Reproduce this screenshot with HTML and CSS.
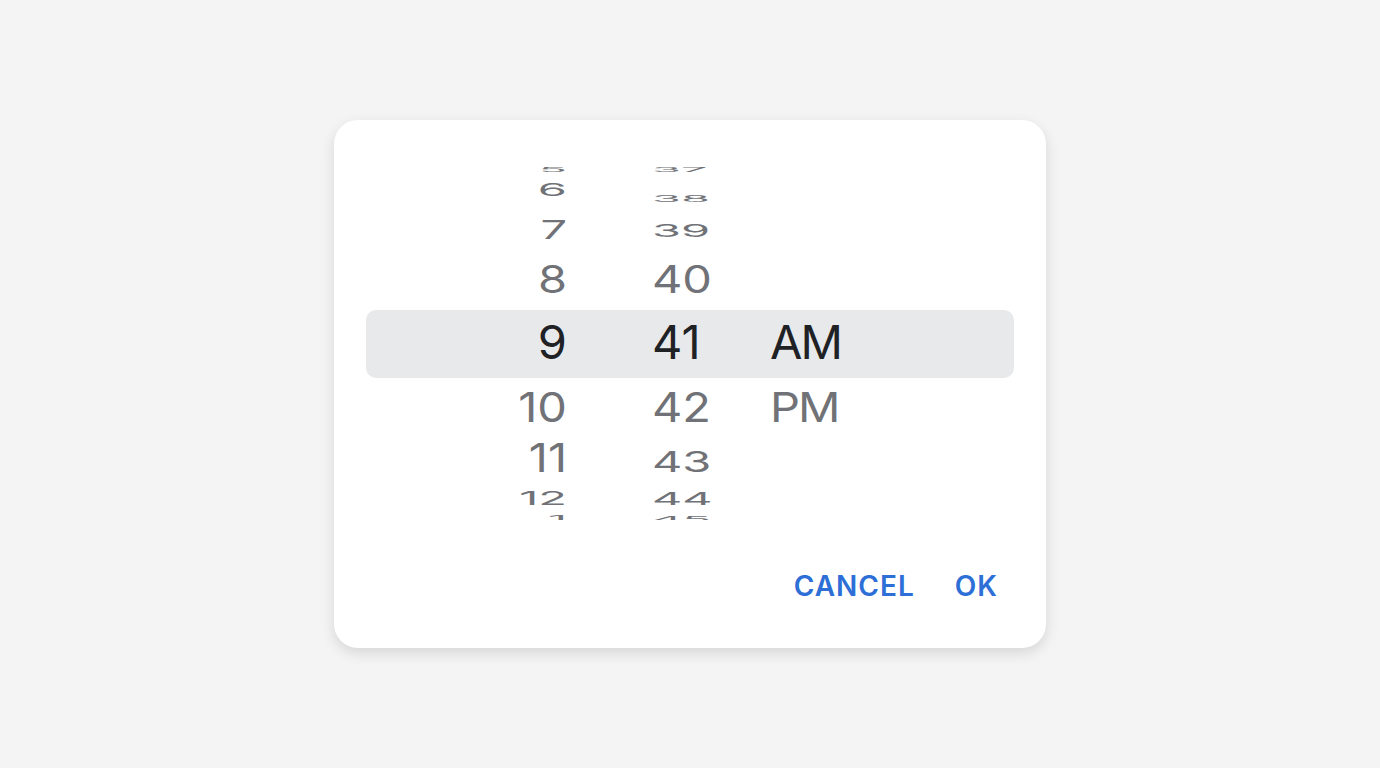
FILE: index.html
```html
<!DOCTYPE html>
<html lang="en">
<head>
  <meta charset="UTF-8">
  <title>Time picker</title>
  <link rel="stylesheet" href="styles.css">
</head>
<body>

<div class="dialog">
  <div class="wheel">
    <div class="band"></div>

    <div class="col hours">
      <div class="item">5</div>
      <div class="item">6</div>
      <div class="item">7</div>
      <div class="item">8</div>
      <div class="item selected">9</div>
      <div class="item">10</div>
      <div class="item">11</div>
      <div class="item">12</div>
      <div class="item">1</div>
    </div>

    <div class="col minutes">
      <div class="item">37</div>
      <div class="item">38</div>
      <div class="item">39</div>
      <div class="item">40</div>
      <div class="item selected">41</div>
      <div class="item">42</div>
      <div class="item">43</div>
      <div class="item">44</div>
      <div class="item">45</div>
    </div>

    <div class="col period">
      <div class="item selected">AM</div>
      <div class="item">PM</div>
    </div>
  </div>

  <div class="actions">
    <button type="button" class="button">CANCEL</button>
    <button type="button" class="button">OK</button>
  </div>
</div>

</body>
</html>
```

FILE: styles.css
```css
body {
  margin: 0;
  height: 100vh;
  background: #f4f4f4;
  font-family: Inter, 'Noto Sans', sans-serif;
  display: flex;
  align-items: center;
  justify-content: center;
}
.dialog {
  box-sizing: border-box;
  width: 712px;
  height: 528px;
  padding: 40px 32px 0;
  background: #fff;
  border-radius: 24px;
  box-shadow: 0 5px 14px rgba(0, 0, 0, 0.12);
}

/* wheel */
.wheel {
  position: relative;
  height: 360px;
  overflow: hidden;
  display: flex;
}
.band {
  position: absolute;
  top: 150px;
  left: 0;
  right: 0;
  height: 68px;
  border-radius: 10px;
  background: #e8e9eb;
}
.col {
  position: relative;
  display: flex;
  flex-direction: column;
}
.hours {
  width: 201px;
  text-align: right;
}
.minutes {
  width: 118px;
  padding-left: 85px;
}
.item {
  height: 0;
  line-height: 0;
  font-size: 47px;
  color: #707277;
  white-space: nowrap;
}
.item.selected {
  color: #202124;
}
.period .item {
  letter-spacing: -2px;
}

/* hour rows: offset from previous row + squash of the drum */
.hours .item:nth-child(1) { margin-top: 10px; transform: scaleY(0.13); }
.hours .item:nth-child(2) { margin-top: 19.5px; transform: scaleY(0.38); }
.hours .item:nth-child(3) { margin-top: 39px; transform: scaleY(0.56); }
.hours .item:nth-child(4) { margin-top: 50.5px; transform: scaleY(0.82); }
.hours .item:nth-child(5) { margin-top: 63px; }
.hours .item:nth-child(6) { margin-top: 65px; transform: scaleY(0.88); }
.hours .item:nth-child(7) { margin-top: 50.5px; transform: scaleY(0.85); }
.hours .item:nth-child(8) { margin-top: 40.5px; transform: scaleY(0.41); }
.hours .item:nth-child(9) { margin-top: 21px; transform: scaleY(0.2); }

.minutes .item:nth-child(1) { margin-top: 10px; transform: scaleY(0.13); }
.minutes .item:nth-child(2) { margin-top: 29px; transform: scaleY(0.19); }
.minutes .item:nth-child(3) { margin-top: 31.5px; transform: scaleY(0.38); }
.minutes .item:nth-child(4) { margin-top: 48.5px; transform: scaleY(0.82); }
.minutes .item:nth-child(5) { margin-top: 63px; }
.minutes .item:nth-child(6) { margin-top: 65px; transform: scaleY(0.88); }
.minutes .item:nth-child(7) { margin-top: 55px; transform: scaleY(0.6); }
.minutes .item:nth-child(8) { margin-top: 36.5px; transform: scaleY(0.38); }
.minutes .item:nth-child(9) { margin-top: 20.5px; transform: scaleY(0.16); }

.period .item:nth-child(1) { margin-top: 182px; }
.period .item:nth-child(2) { margin-top: 65px; transform: scaleY(0.88); }

/* buttons */
.actions {
  display: flex;
  justify-content: flex-end;
  gap: 8px;
  margin-top: 42px;
}
.button {
  height: 48px;
  padding: 0 16px;
  border: none;
  background: none;
  font-family: Inter, 'Noto Sans', sans-serif;
  font-size: 28px;
  font-weight: 600;
  letter-spacing: 1px;
  color: #2d6fd6;
  cursor: pointer;
}
```
